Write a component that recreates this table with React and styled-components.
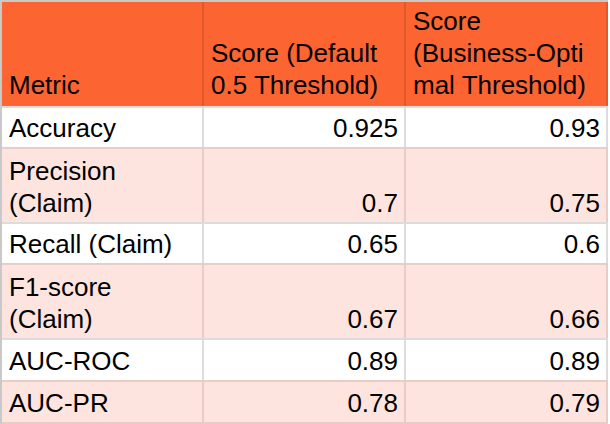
import React from 'react';
import styled, { createGlobalStyle } from 'styled-components';

const GlobalStyle = createGlobalStyle`
  html, body {
    margin: 0;
    padding: 0;
    background: #ffffff;
  }
  body {
    font-family: "Liberation Sans", Arial, sans-serif;
    color: #000000;
  }
`;

const tones = {
  head: { bg: '#fc6432', line: '#e1592b', top: '#c9c9c9', pb: 5 },
  white: { bg: '#ffffff', line: '#dcdcdc', top: '#dcdcdc', pb: 3 },
  pink: { bg: '#fee4de', line: '#e8cdc6', top: '#e8cdc6', pb: 3 },
};

const Sheet = styled.div`
  display: flex;
  flex-direction: column;
  width: 608px;
  border-left: 2px solid #c9c9c9;
  box-sizing: border-box;
`;

const Row = styled.div`
  display: grid;
  grid-template-columns: 202px 202px 202px;
  height: ${p => p.h}px;
  background: ${p => tones[p.tone].bg};
  border-top: 2px solid ${p => tones[p.tone].top};
  border-bottom: ${p => (p.last ? `2px solid ${tones[p.tone].line}` : 'none')};
`;

const Cell = styled.div`
  display: flex;
  flex-direction: column;
  justify-content: flex-end;
  align-items: ${p => (p.num ? 'flex-end' : 'flex-start')};
  text-align: ${p => (p.num ? 'right' : 'left')};
  border-right: 2px solid ${p => tones[p.tone].line};
  padding: 0 6px ${p => tones[p.tone].pb}px 7px;
  font-size: 26px;
  line-height: 32px;
  overflow: hidden;
`;

const rows = [
  { name: 'Accuracy', a: '0.925', b: '0.93', h: 39, tone: 'white' },
  { name: 'Precision (Claim)', a: '0.7', b: '0.75', h: 73, tone: 'pink' },
  { name: 'Recall (Claim)', a: '0.65', b: '0.6', h: 39, tone: 'white' },
  { name: 'F1-score (Claim)', a: '0.67', b: '0.66', h: 73, tone: 'pink' },
  { name: 'AUC-ROC', a: '0.89', b: '0.89', h: 40, tone: 'white' },
  { name: 'AUC-PR', a: '0.78', b: '0.79', h: 40, tone: 'pink' },
];

function App() {
  return (
    <>
      <GlobalStyle />
      <Sheet>
        <Row h={104} tone="head">
          <Cell tone="head">Metric</Cell>
          <Cell tone="head">
            <span>Score (Default<br />0.5 Threshold)</span>
          </Cell>
          <Cell tone="head">
            <span>Score<br />(Business-Opti<br />mal Threshold)</span>
          </Cell>
        </Row>
        {rows.map((r, i) => (
          <Row key={r.name} h={r.h} tone={r.tone} last={i === rows.length - 1}>
            <Cell tone={r.tone}>{r.name}</Cell>
            <Cell tone={r.tone} num>{r.a}</Cell>
            <Cell tone={r.tone} num>{r.b}</Cell>
          </Row>
        ))}
      </Sheet>
    </>
  );
}

export default App;
